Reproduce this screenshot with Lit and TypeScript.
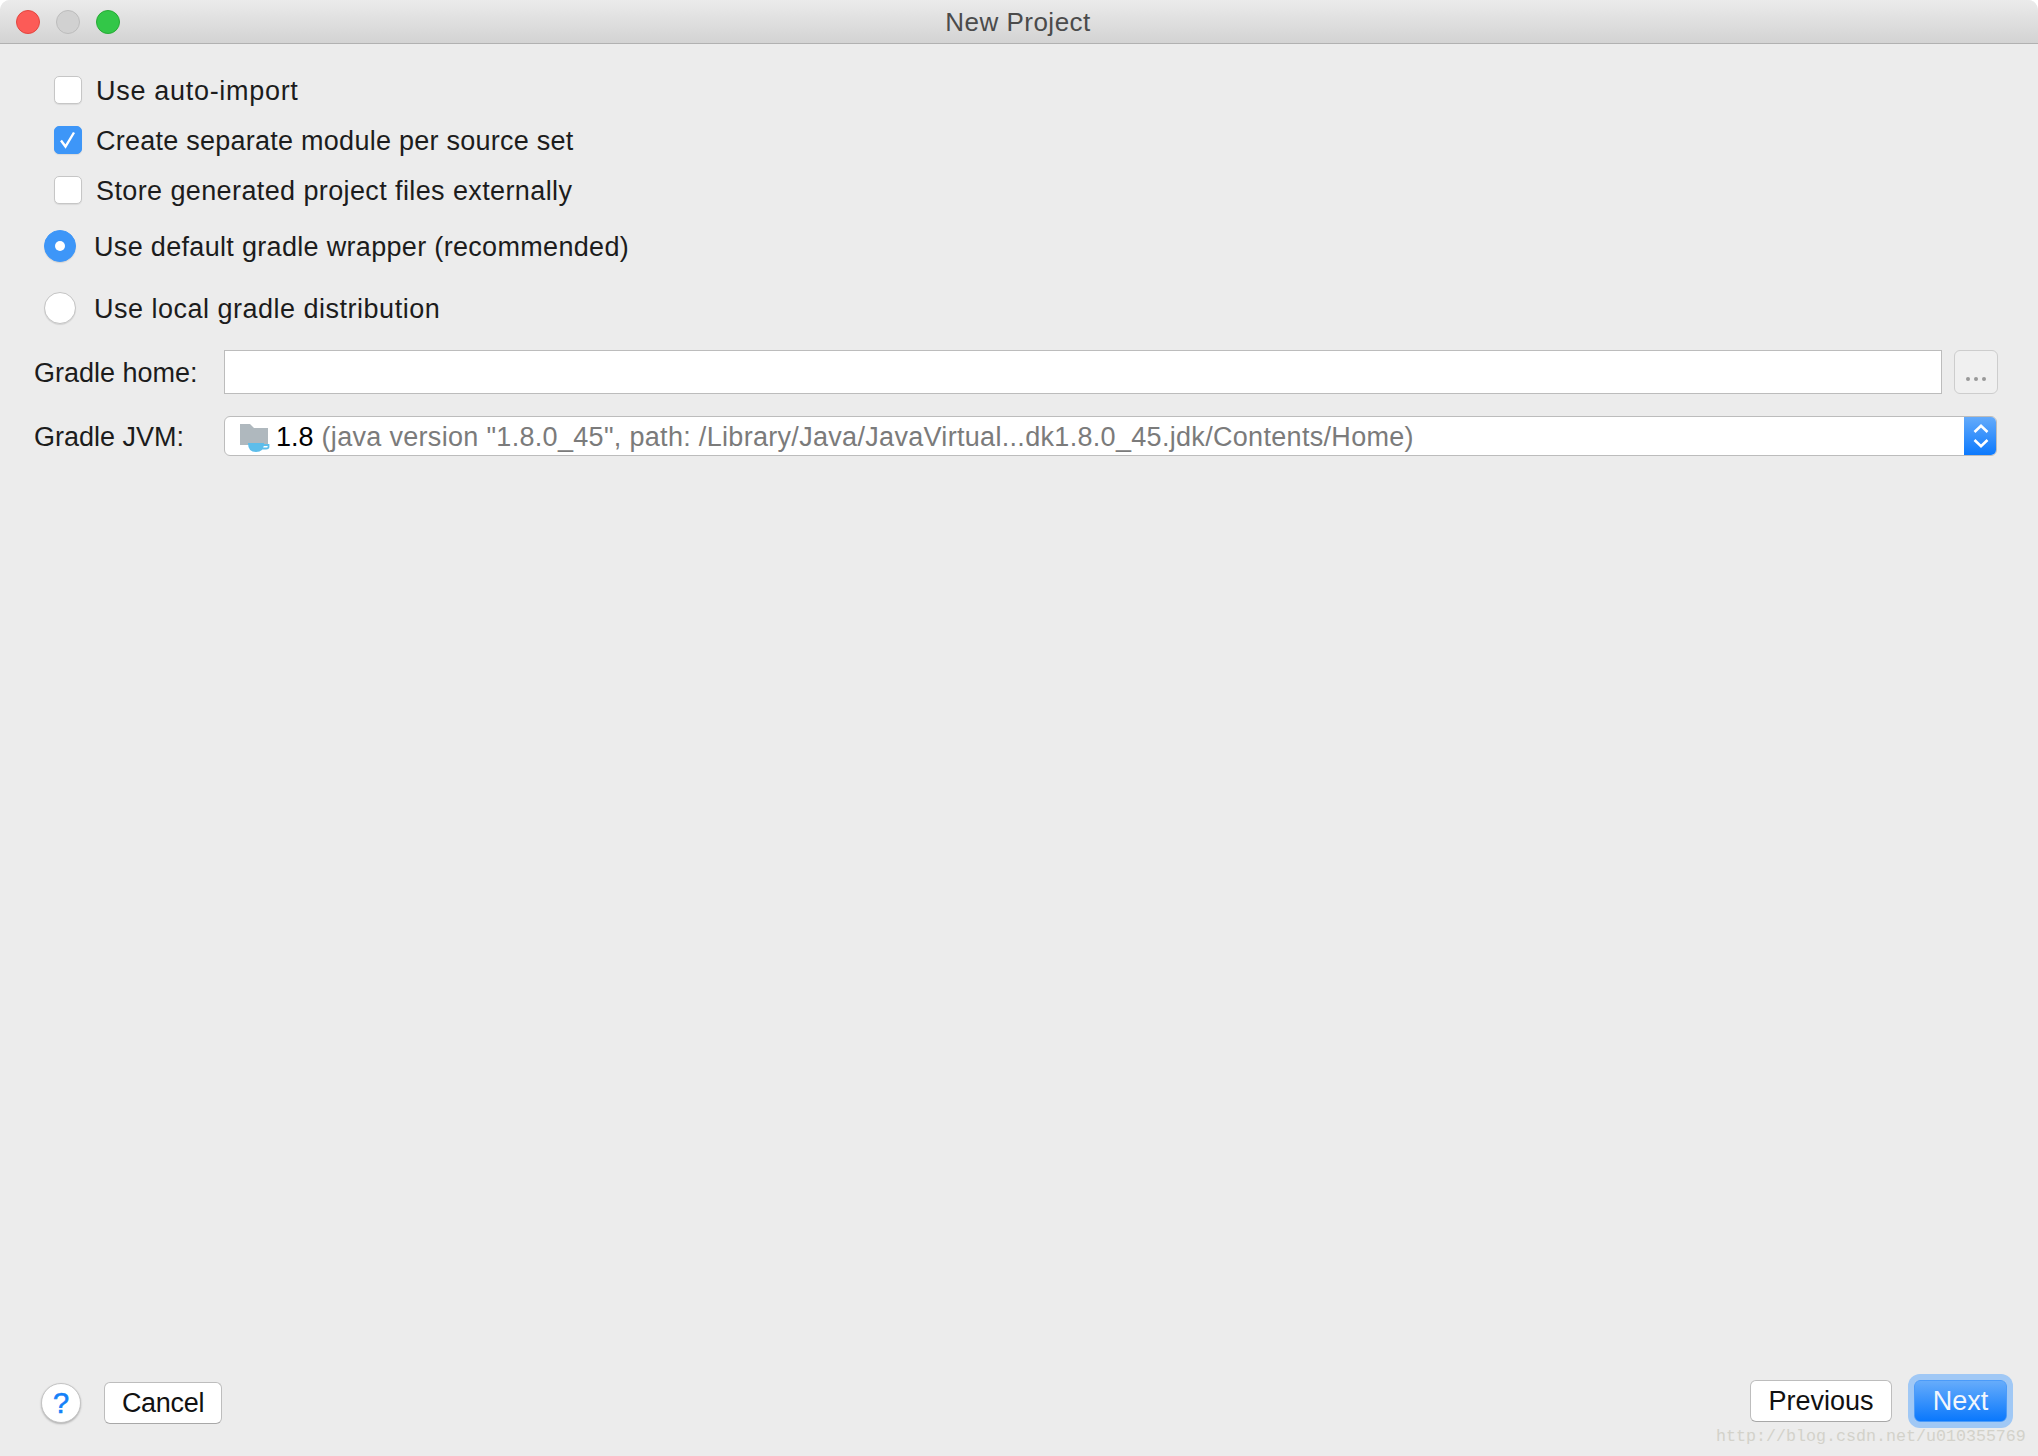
import { LitElement, html, css } from "lit";
import { customElement } from "lit/decorators.js";

@customElement("app-root")
export class AppRoot extends LitElement {
  static styles = css`
    :host {
      display: flex;
      flex-direction: column;
      position: relative;
      width: 2038px;
      height: 1456px;
      background: #fff;
      overflow: hidden;
      font-family: "Liberation Sans", Arial, sans-serif;
      font-size: 27px;
      color: #1c1c1c;
    }
    .window {
      flex: 1;
      display: flex;
      flex-direction: column;
      background: #ececec;
      border-radius: 10px 10px 0 0;
      overflow: hidden;
    }
    .titlebar {
      height: 44px;
      box-sizing: border-box;
      flex: none;
      display: flex;
      align-items: center;
      position: relative;
      background: linear-gradient(#ebebeb, #d3d3d3);
      border-bottom: 1px solid #b1b1b1;
      padding-left: 16px;
      gap: 16px;
    }
    .light {
      width: 24px;
      height: 24px;
      border-radius: 50%;
      box-sizing: border-box;
      border: 1px solid;
      margin-top: 1px;
    }
    .red { background: #fc5b57; border-color: #e2463f; }
    .grey { background: #d1d1d1; border-color: #bcbcbc; }
    .green { background: #33c748; border-color: #27aa35; }
    .title {
      position: absolute;
      left: 0;
      right: 2px;
      padding-top: 2px;
      text-align: center;
      font-size: 26px;
      letter-spacing: 0.5px;
      color: #4b4b4b;
    }
    .content {
      flex: 1;
      display: flex;
      flex-direction: column;
      padding-top: 32px;
    }
    .checks {
      display: flex;
      flex-direction: column;
      gap: 22px;
      padding-left: 54px;
    }
    .check {
      display: flex;
      align-items: center;
      height: 28px;
      gap: 14px;
      white-space: nowrap;
    }
    .text {
      padding-top: 2px;
    }
    .sp-25 { letter-spacing: 0.25px; }
    .sp-32 { letter-spacing: 0.32px; }
    .sp-39 { letter-spacing: 0.39px; }
    .sp-50 { letter-spacing: 0.5px; }
    .sp-70 { letter-spacing: 0.7px; }
    .box {
      flex: none;
      width: 28px;
      height: 28px;
      box-sizing: border-box;
      border-radius: 5px;
      background: #fff;
      border: 1px solid #c6c6c6;
      box-shadow: 0 1px 1px rgba(0, 0, 0, 0.08);
      display: flex;
      align-items: center;
      justify-content: center;
    }
    .box.on {
      background: #3d96f8;
      border-color: #3d96f8;
    }
    .radios {
      display: flex;
      flex-direction: column;
      gap: 30px;
      padding: 26px 0 0 44px;
    }
    .radio-row {
      display: flex;
      align-items: center;
      height: 32px;
      gap: 18px;
      white-space: nowrap;
    }
    .radio {
      flex: none;
      width: 32px;
      height: 32px;
      box-sizing: border-box;
      border-radius: 50%;
      background: #fff;
      border: 1px solid #c4c4c4;
      box-shadow: 0 1px 1px rgba(0, 0, 0, 0.1);
      display: flex;
      align-items: center;
      justify-content: center;
    }
    .radio.on {
      background: #3d96f8;
      border-color: #3d96f8;
    }
    .dot {
      width: 10px;
      height: 10px;
      border-radius: 50%;
      background: #fff;
    }
    .form {
      display: flex;
      flex-direction: column;
      gap: 22px;
      padding: 26px 40px 0 34px;
    }
    .field {
      display: flex;
      align-items: center;
    }
    .label {
      flex: none;
      width: 190px;
      padding-top: 2px;
      white-space: nowrap;
    }
    .input {
      flex: 1;
      height: 44px;
      box-sizing: border-box;
      background: #fff;
      border: 1px solid #bcbcbc;
    }
    .browse {
      flex: none;
      width: 44px;
      height: 44px;
      box-sizing: border-box;
      margin-left: 12px;
      border: 1px solid #cdcdcd;
      border-radius: 6px;
      background: #f0f0f0;
      display: flex;
      align-items: flex-end;
      justify-content: center;
      gap: 4px;
      padding-bottom: 12px;
    }
    .browse i {
      width: 4px;
      height: 4px;
      border-radius: 50%;
      background: #999;
    }
    .combo {
      flex: 1;
      height: 40px;
      box-sizing: border-box;
      background: #fff;
      border: 1px solid #bcbcbc;
      border-radius: 6px;
      display: flex;
      align-items: center;
      padding-left: 15px;
      white-space: nowrap;
      overflow: hidden;
      margin-right: 1px;
    }
    .combo svg.folder {
      flex: none;
      margin-right: 6px;
    }
    .version {
      color: #000;
      padding-top: 2px;
    }
    .path {
      color: #7b7b7b;
      margin-left: 8px;
      padding-top: 2px;
      letter-spacing: 0.31px;
    }
    .stepper {
      flex: none;
      margin-left: auto;
      width: 33px;
      align-self: stretch;
      margin-top: -1px;
      margin-bottom: -1px;
      margin-right: -1px;
      background: linear-gradient(#66acfb, #0a78fd);
      display: flex;
      align-items: center;
      justify-content: center;
    }
    .footer {
      flex: none;
      margin-top: auto;
      display: flex;
      align-items: flex-start;
      padding: 0 31px 32px 41px;
    }
    .help {
      width: 40px;
      height: 40px;
      box-sizing: border-box;
      margin-top: 3px;
      border-radius: 50%;
      background: #fff;
      border: 1px solid #c4c4c4;
      box-shadow: 0 1px 2px rgba(0, 0, 0, 0.25);
      color: #1581f8;
      font-size: 29px;
      -webkit-text-stroke: 0.6px #1581f8;
      display: flex;
      align-items: center;
      justify-content: center;
    }
    .btn {
      height: 42px;
      box-sizing: border-box;
      background: #fff;
      border: 1px solid #bdbdbd;
      border-bottom-color: #a8a8a8;
      border-radius: 6px;
      display: flex;
      align-items: center;
      justify-content: center;
      color: #111;
    }
    .cancel {
      width: 118px;
      margin: 2px 0 0 23px;
      letter-spacing: -0.3px;
    }
    .prev {
      width: 142px;
      margin-left: auto;
    }
    .next {
      width: 93px;
      margin-left: 22px;
      border: 1px solid #4b9bf9;
      background: linear-gradient(#66acfb, #0a78fd);
      color: #f2f6fc;
      box-shadow: 0 0 0 6px #a0c8f5;
    }
    .watermark {
      position: absolute;
      left: 1716px;
      top: 1427px;
      font-family: "Liberation Mono", monospace;
      font-size: 16.67px;
      line-height: 20px;
      color: #d3d2ca;
      white-space: nowrap;
    }
  `;

  render() {
    return html`
      <div class="window">
        <div class="titlebar">
          <span class="light red"></span>
          <span class="light grey"></span>
          <span class="light green"></span>
          <span class="title">New Project</span>
        </div>
        <div class="content">
          <div class="checks">
            <div class="check"><span class="box"></span><span class="text sp-70">Use auto-import</span></div>
            <div class="check">
              <span class="box on">
                <svg width="18" height="18" viewBox="0 0 18 18">
                  <path d="M2 9.5 L6.5 15.5 L15 1.5" fill="none" stroke="#fff" stroke-width="2.4" />
                </svg>
              </span>
              <span class="text sp-25">Create separate module per source set</span>
            </div>
            <div class="check"><span class="box"></span><span class="text sp-39">Store generated project files externally</span></div>
          </div>
          <div class="radios">
            <div class="radio-row">
              <span class="radio on"><span class="dot"></span></span>
              <span class="text sp-32">Use default gradle wrapper (recommended)</span>
            </div>
            <div class="radio-row"><span class="radio"></span><span class="text sp-50">Use local gradle distribution</span></div>
          </div>
          <div class="form">
            <div class="field">
              <span class="label">Gradle home:</span>
              <div class="input"></div>
              <div class="browse"><i></i><i></i><i></i></div>
            </div>
            <div class="field">
              <span class="label">Gradle JVM:</span>
              <div class="combo">
                <svg class="folder" width="30" height="32" viewBox="0 0 30 32">
                  <path d="M0 4 H10 L14 8 H28 V25 H0 Z" fill="#afb8be" />
                  <path d="M8 23 H24 Q24 32 16 32 Q8 32 8 23 Z" fill="#5dbdea" />
                  <path d="M23 25 H28.5 V27 Q28.5 28.5 26 28.5 H22" fill="none" stroke="#5dbdea" stroke-width="1.8" />
                </svg>
                <span class="version">1.8</span>
                <span class="path">(java version "1.8.0_45", path: /Library/Java/JavaVirtual...dk1.8.0_45.jdk/Contents/Home)</span>
                <span class="stepper">
                  <svg width="16" height="30" viewBox="0 0 16 30">
                    <path d="M1.5 11 L8 4.8 L14.5 11 M1.5 19 L8 25.2 L14.5 19" fill="none" stroke="#fff" stroke-width="2.6" />
                  </svg>
                </span>
              </div>
            </div>
          </div>
          <div class="footer">
            <span class="help">?</span>
            <span class="btn cancel">Cancel</span>
            <span class="btn prev">Previous</span>
            <span class="btn next">Next</span>
          </div>
        </div>
      </div>
      <div class="watermark">http://blog.csdn.net/u010355769</div>
    `;
  }
}
